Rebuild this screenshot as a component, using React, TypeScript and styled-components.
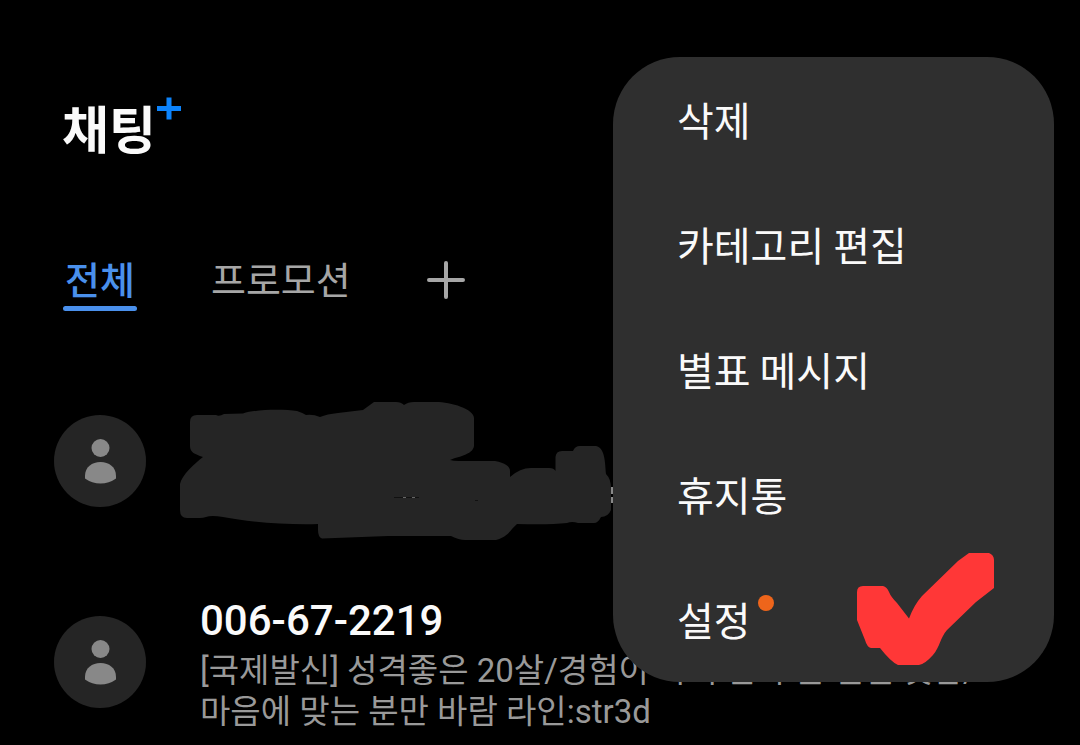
import React from "react";
import styled, { createGlobalStyle } from "styled-components";

const GlobalStyle = createGlobalStyle`
  * { box-sizing: border-box; }
  html { background: #000; }
  body { margin: 0; background: #000; font-family: Roboto, "Noto Sans CJK KR", sans-serif; }
  button { font: inherit; color: inherit; background: none; border: 0; padding: 0; cursor: pointer; }
  h1, h2, p, ul { margin: 0; padding: 0; list-style: none; }
`;

const Screen = styled.div`
  position: relative;
  min-height: 100vh;
  padding: 91px 26px 0 54px;
  overflow: hidden;
  color: #fafafa;
`;

const Brand = styled.h1`
  display: flex;
  align-items: flex-start;
  gap: 1px;
  height: 72px;
  padding-left: 8px;
  font: 700 51px/72px "Noto Sans CJK KR", sans-serif;
`;

const BrandPlus = styled.svg`
  width: 26px;
  height: 24px;
  margin-top: 6px;
`;

const Tabs = styled.nav`
  display: flex;
  align-items: flex-start;
  margin-top: 92px;
  padding-left: 9px;
`;

const Tab = styled.button<{ $active?: boolean }>`
  display: flex;
  flex-direction: column;
  margin-right: 72px;
  padding: 0 2px;
  font: ${(p) => (p.$active ? 500 : 400)} 38px/46px "Noto Sans CJK KR", sans-serif;
  color: ${(p) => (p.$active ? "#4a90ec" : "#a6a6a6")};

  &::after {
    content: "";
    height: 5px;
    margin: 5px -2px 0;
    border-radius: 3px;
    background: ${(p) => (p.$active ? "#4a90ec" : "transparent")};
  }
`;

const AddTab = styled.button`
  width: 40px;
  height: 38px;
  margin-top: 6px;
  svg { display: block; margin-left: auto; }
`;

const Threads = styled.ul`
  display: flex;
  flex-direction: column;
  gap: 59px;
  margin-top: 86px;
`;

const Thread = styled.li`
  display: flex;
  align-items: flex-start;
`;

const Avatar = styled.svg`
  flex: none;
  width: 92px;
  height: 92px;
  margin-top: 18px;
`;

const Scribble = styled.svg`
  width: 434px;
  height: 142px;
  margin-left: 33px;
`;

const Content = styled.div`
  flex: 1;
  margin-left: 54px;
  white-space: nowrap;
`;

const Sender = styled.h2`
  font: 500 42px/46px Roboto, sans-serif;
`;

const Preview = styled.p`
  margin-top: 6px;
  font-size: 33px;
  line-height: 41px;
  color: #999;
`;

const Menu = styled.div`
  position: absolute;
  top: 57px;
  right: 26px;
  width: 441px;
  padding-bottom: 5px;
  border-radius: 67px;
  background: #2f2f2f;
`;

const MenuItem = styled.button`
  display: flex;
  align-items: center;
  width: 100%;
  height: 124px;
  padding-left: 64px;
  font: 400 40px/60px "Noto Sans CJK KR", sans-serif;
  text-align: left;
`;

const MenuList = styled.div`
  display: flex;
  flex-direction: column;
  gap: 1px;
  margin-bottom: -4px;
`;

const NewDot = styled.span`
  width: 16px;
  height: 16px;
  margin: 0 0 32px 7px;
  border-radius: 50%;
  background: #ee651b;
`;

const Check = styled.svg`
  position: absolute;
  right: 59px;
  bottom: 16px;
  width: 138px;
  height: 114px;
`;

const Person = () => (
  <Avatar viewBox="0 0 92 92" aria-hidden="true">
    <circle cx="46" cy="46" r="46" fill="#252525" />
    <circle cx="46.500" cy="33" r="9" fill="#888" />
    <path d="M31 61C31 52 38 47 46.500 47S62 52 62 61V63.500Q55 68.500 46.500 68.500T31 63.500Z" fill="#888" />
  </Avatar>
);

const items = ["삭제", "카테고리 편집", "별표 메시지", "휴지통", "설정"];

export default function App() {
  return (
    <>
      <GlobalStyle />
      <Screen>
        <Brand>
          채팅
          <BrandPlus viewBox="0 0 26 24" role="img" aria-label="+">
            <path d="M0 11.500H24M12 0.500V22.500" stroke="#0c83fb" strokeWidth="5" />
          </BrandPlus>
        </Brand>
        <Tabs>
          <Tab $active>전체</Tab>
          <Tab>프로모션</Tab>
          <AddTab aria-label="카테고리 추가">
            <svg width="38" height="38" viewBox="0 0 38 38">
              <path d="M2 19H36M19 2V36" stroke="#a6a6a6" strokeWidth="4" strokeLinecap="round" />
            </svg>
          </AddTab>
        </Tabs>
        <Threads>
          <Thread>
            <Person />
            <Scribble viewBox="179 397 434 142" aria-hidden="true" overflow="visible">
              <path
                fill="#252525"
                d="M190 422Q190 415 197 415H216Q219 417 224 414L243 413.500C257 409 284 409 297 411Q303 413 306 415Q313 414 320 417Q327 414 338 413L363 410L374 402H396Q401 402 404 405Q408 402 414 402H436C451 402 474 409 474 418V446C473 455 456 457 450 460Q453 461 459 461H495Q510 464 510 471V477Q520 468 531 468H549Q554 468 555.500 471V457Q556 451 562 451H573Q575 446 580 446H596C605 448 605 462 606 474Q611 479 611 488V510Q608 517 601 517Q598 523 594 523H578Q572 521 567 523Q549 525 517 524C510 530 509 536 496 540H465Q459 540 451 536H388L322 538.500Q318 537 318 530V524C287 525 248 522 223 517Q211 515 206 517Q203 518 200 518H187Q180 518 180 510V484C182 475 194 464 203 457C194 454 190 452 190 446Z"
              />
              <path d="M394 497.500H419M475 500.500H478" stroke="#111" />
              <path d="M403 497.500H406M412 497.500H415" stroke="#666" />
              <path d="M612 487V494M612 497V503" stroke="#888" strokeWidth="2" />
            </Scribble>
          </Thread>
          <Thread>
            <Person />
            <Content>
              <Sender>006-67-2219</Sender>
              <Preview>
                [국제발신] 성격좋은 20살/경험이 아이 만나 본 신인 첫남/
                <br />
                마음에 맞는 분만 바람 라인:str3d
              </Preview>
            </Content>
          </Thread>
        </Threads>
        <Menu>
          <MenuList>
            {items.map((label) => (
              <MenuItem key={label}>
                {label}
                {label === "설정" && <NewDot />}
              </MenuItem>
            ))}
          </MenuList>
          <Check viewBox="857 552 138 114" aria-hidden="true">
            <path
              fill="#ff3737"
              d="M857 592Q857 586 863 586H883Q887 587 889 592Q891 597 897 603L909 618.500Q914 605 922 596L958 561L969 553H989Q994 555 994 560V588L976 602L947 630C940 638 940 647 933 655Q925 664 919 665H898Q891 662 880 648H871Q867 647 865 640L857 620Z"
            />
          </Check>
        </Menu>
      </Screen>
    </>
  );
}
